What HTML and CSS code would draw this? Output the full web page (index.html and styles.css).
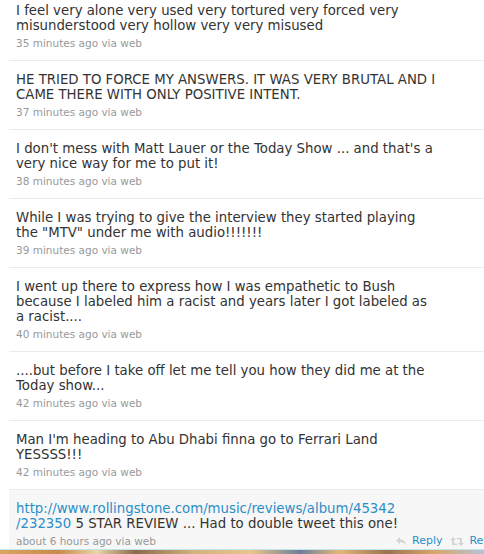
FILE: index.html
```html
<!DOCTYPE html>
<html lang="en">
<head>
    <meta charset="UTF-8">
    <title>Timeline</title>
    <link rel="stylesheet" href="styles.css">
</head>
<body>
    <div class="page">
        <ol class="timeline">
            <li class="status">
                <span class="entry">I feel very alone very used very tortured very forced very misunderstood very hollow very very misused</span>
                <span class="meta">35 minutes ago via web</span>
            </li>
            <li class="status">
                <span class="entry">HE TRIED TO FORCE MY ANSWERS. IT WAS VERY BRUTAL AND I CAME THERE WITH ONLY POSITIVE INTENT.</span>
                <span class="meta">37 minutes ago via web</span>
            </li>
            <li class="status">
                <span class="entry">I don't mess with Matt Lauer or the Today Show ... and that's a very nice way for me to put it!</span>
                <span class="meta">38 minutes ago via web</span>
            </li>
            <li class="status">
                <span class="entry">While I was trying to give the interview they started playing the&nbsp;"MTV" under me with audio!!!!!!!</span>
                <span class="meta">39 minutes ago via web</span>
            </li>
            <li class="status">
                <span class="entry">I went up there to express how I was empathetic to Bush because I labeled him a racist and years later I got labeled as a&nbsp;racist....</span>
                <span class="meta">40 minutes ago via web</span>
            </li>
            <li class="status">
                <span class="entry">....but before I take off let me tell you how they did me at the Today show...</span>
                <span class="meta">42 minutes ago via web</span>
            </li>
            <li class="status">
                <span class="entry">Man I'm heading to Abu Dhabi finna go to Ferrari Land YESSSS!!!</span>
                <span class="meta">42 minutes ago via web</span>
            </li>
            <li class="status hover">
                <span class="entry"><a href="#">http://www.rollingstone.com/music/reviews/album/45342<wbr>/232350</a> 5 STAR REVIEW ... Had to double tweet this one!</span>
                <span class="meta">about 6 hours ago via web</span>
                <span class="actions">
                    <a href="#" class="action">
                        <svg width="12" height="11" viewBox="0 0 12 11"><path d="M5 1 L1 4.5 L5 8 V6 C8 6 10 7 11 10 C11 6 9 3.5 5 3.2 Z" fill="#d4d4d4"/></svg>
                        Reply
                    </a>
                    <a href="#" class="action">
                        <svg width="14" height="11" viewBox="0 0 14 11"><path d="M3 1 L0 4 H2 V9 H8 L6.5 7.5 H4 V4 H6 Z M11 10 L14 7 H12 V2 H6 L7.5 3.5 H10 V7 H8 Z" fill="#d4d4d4"/></svg>
                        Retweet
                    </a>
                </span>
            </li>
        </ol>
        <div class="backdrop"></div>
    </div>
</body>
</html>
```
FILE: styles.css
```css
body {
    margin: 0;
    background-color: #fff;
    font-family: "DejaVu Sans", sans-serif;
    color: #333;
    overflow: hidden;
}
.page {
    height: 554px;
    display: flex;
    flex-direction: column;
}
.timeline {
    flex: 1;
    overflow: hidden;
    list-style: none;
    margin: -8px 0 0 9px;
    padding: 0;
    width: 520px;
}
.status {
    position: relative;
    border-bottom: 1px solid #ebebeb;
    padding: 11px 0 9px 7px;
}
.status.hover {
    background-color: #f7f7f7;
}
.entry {
    display: block;
    width: 424px;
    font-size: 13.3px;
    line-height: 15px;
}
.entry a {
    color: #2b8ec8;
    text-decoration: none;
}
.meta {
    display: block;
    margin-top: 2px;
    font-size: 10.5px;
    line-height: 16px;
    color: #999;
}
.actions {
    position: absolute;
    left: 386px;
    bottom: 9px;
    display: flex;
    gap: 8px;
    font-size: 11px;
    line-height: 16px;
    white-space: nowrap;
}
.action {
    display: flex;
    align-items: center;
    gap: 5px;
    color: #2b8ec8;
    text-decoration: none;
}
.backdrop {
    height: 4px;
    border-top: 1px solid #bfe6ea;
    background: linear-gradient(90deg, #d9a560 0%, #c88a4a 12%, #e9d6a8 20%, #8a6a4c 28%, #d1b37e 40%, #e8c58a 52%, #6f7f9a 62%, #e2b879 70%, #9b7350 80%, #d8a86a 90%, #b7c3d6 100%);
}
```
